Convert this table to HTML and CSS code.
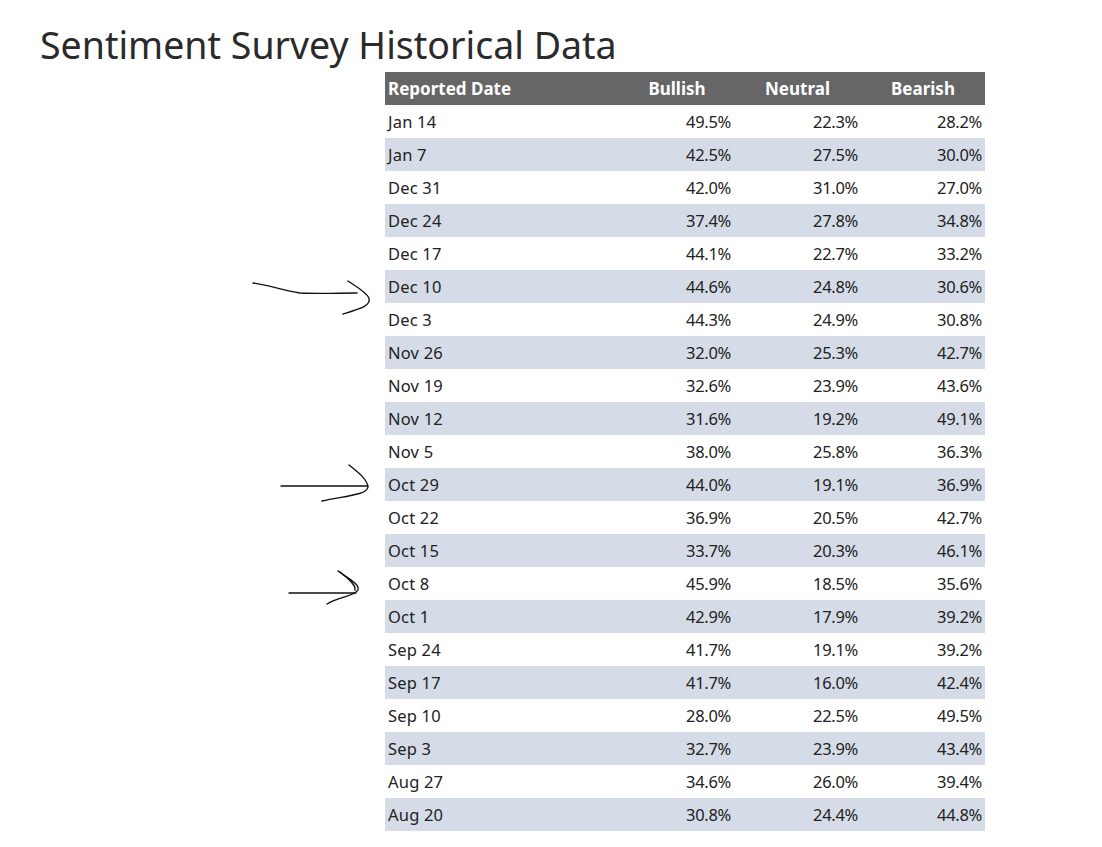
FILE: index.html
```html
<!DOCTYPE html>
<html lang="en">
<head>
<meta charset="utf-8">
<title>Sentiment Survey Historical Data</title>
<link rel="stylesheet" href="styles.css">
</head>
<body>
<div class="page">
  <h1 class="title">Sentiment Survey Historical Data</h1>
  <div class="table-wrap">
    <table class="data">
      <colgroup>
        <col class="c-date"><col class="c-bull"><col class="c-neu"><col class="c-bear">
      </colgroup>
      <thead>
        <tr><th class="left">Reported Date</th><th>Bullish</th><th>Neutral</th><th>Bearish</th></tr>
      </thead>
      <tbody>
        <tr><td>Jan 14</td><td>49.5%</td><td>22.3%</td><td>28.2%</td></tr>
        <tr><td>Jan 7</td><td>42.5%</td><td>27.5%</td><td>30.0%</td></tr>
        <tr><td>Dec 31</td><td>42.0%</td><td>31.0%</td><td>27.0%</td></tr>
        <tr><td>Dec 24</td><td>37.4%</td><td>27.8%</td><td>34.8%</td></tr>
        <tr><td>Dec 17</td><td>44.1%</td><td>22.7%</td><td>33.2%</td></tr>
        <tr><td>Dec 10</td><td>44.6%</td><td>24.8%</td><td>30.6%</td></tr>
        <tr><td>Dec 3</td><td>44.3%</td><td>24.9%</td><td>30.8%</td></tr>
        <tr><td>Nov 26</td><td>32.0%</td><td>25.3%</td><td>42.7%</td></tr>
        <tr><td>Nov 19</td><td>32.6%</td><td>23.9%</td><td>43.6%</td></tr>
        <tr><td>Nov 12</td><td>31.6%</td><td>19.2%</td><td>49.1%</td></tr>
        <tr><td>Nov 5</td><td>38.0%</td><td>25.8%</td><td>36.3%</td></tr>
        <tr><td>Oct 29</td><td>44.0%</td><td>19.1%</td><td>36.9%</td></tr>
        <tr><td>Oct 22</td><td>36.9%</td><td>20.5%</td><td>42.7%</td></tr>
        <tr><td>Oct 15</td><td>33.7%</td><td>20.3%</td><td>46.1%</td></tr>
        <tr><td>Oct 8</td><td>45.9%</td><td>18.5%</td><td>35.6%</td></tr>
        <tr><td>Oct 1</td><td>42.9%</td><td>17.9%</td><td>39.2%</td></tr>
        <tr><td>Sep 24</td><td>41.7%</td><td>19.1%</td><td>39.2%</td></tr>
        <tr><td>Sep 17</td><td>41.7%</td><td>16.0%</td><td>42.4%</td></tr>
        <tr><td>Sep 10</td><td>28.0%</td><td>22.5%</td><td>49.5%</td></tr>
        <tr><td>Sep 3</td><td>32.7%</td><td>23.9%</td><td>43.4%</td></tr>
        <tr><td>Aug 27</td><td>34.6%</td><td>26.0%</td><td>39.4%</td></tr>
        <tr><td>Aug 20</td><td>30.8%</td><td>24.4%</td><td>44.8%</td></tr>
      </tbody>
    </table>
  </div>
  <svg class="annotations" width="1102" height="847" viewBox="0 0 1102 847" aria-hidden="true">
    <g class="ink">
      <path d="M253 283 C268 285 282 290 300 293 C318 294 340 293 357 293"/>
      <path d="M348 281 C357 287 366 292 369 298 C371 306 360 309 343 314"/>
      <path d="M281 486 L368 486"/>
      <path d="M349 465 C358 472 367 479 368 487 C367 495 345 496 322 501"/>
      <path d="M289 593 L356 593"/>
      <path d="M338 571 C347 578 360 584 358 590 C355 596 338 597 327 604"/>
      <path d="M340 572 C349 579 356 585 355 590"/>
    </g>
  </svg>
</div>
</body>
</html>
```

FILE: styles.css
```css
html, body {
  margin: 0;
  padding: 0;
  background: #ffffff;
}
.page {
  position: relative;
  width: 1102px;
  height: 847px;
  font-family: "Noto Sans", "Open Sans", sans-serif;
  color: #222222;
}
.title {
  margin: 0;
  padding: 20px 0 0 40px;
  font-size: 37.5px;
  font-weight: 400;
  line-height: 49px;
  color: #2a2a2a;
}
.table-wrap {
  margin: 3px 0 0 385px;
}
.data {
  border-collapse: collapse;
  width: 600px;
  table-layout: fixed;
}
.c-date { width: 235px; }
.c-bull { width: 114px; }
.c-neu { width: 127px; }
.c-bear { width: 124px; }
.data th {
  height: 33px;
  padding: 0 3px;
  background: #666666;
  color: #ffffff;
  font-size: 17px;
  font-weight: 700;
  text-align: center;
}
.data th.left { text-align: left; }
.data td {
  height: 33px;
  padding: 0 3px;
  font-size: 16.5px;
  text-align: right;
  color: #222222;
  letter-spacing: -0.3px;
}
.data td:first-child {
  text-align: left;
  letter-spacing: 0.2px;
}
.data tbody tr:nth-child(even) td { background: #d6dce7; }
.annotations {
  position: absolute;
  left: 0;
  top: 0;
  pointer-events: none;
}
.ink path {
  fill: none;
  stroke: #111111;
  stroke-width: 1.4;
  stroke-linecap: round;
  stroke-linejoin: round;
}
```
